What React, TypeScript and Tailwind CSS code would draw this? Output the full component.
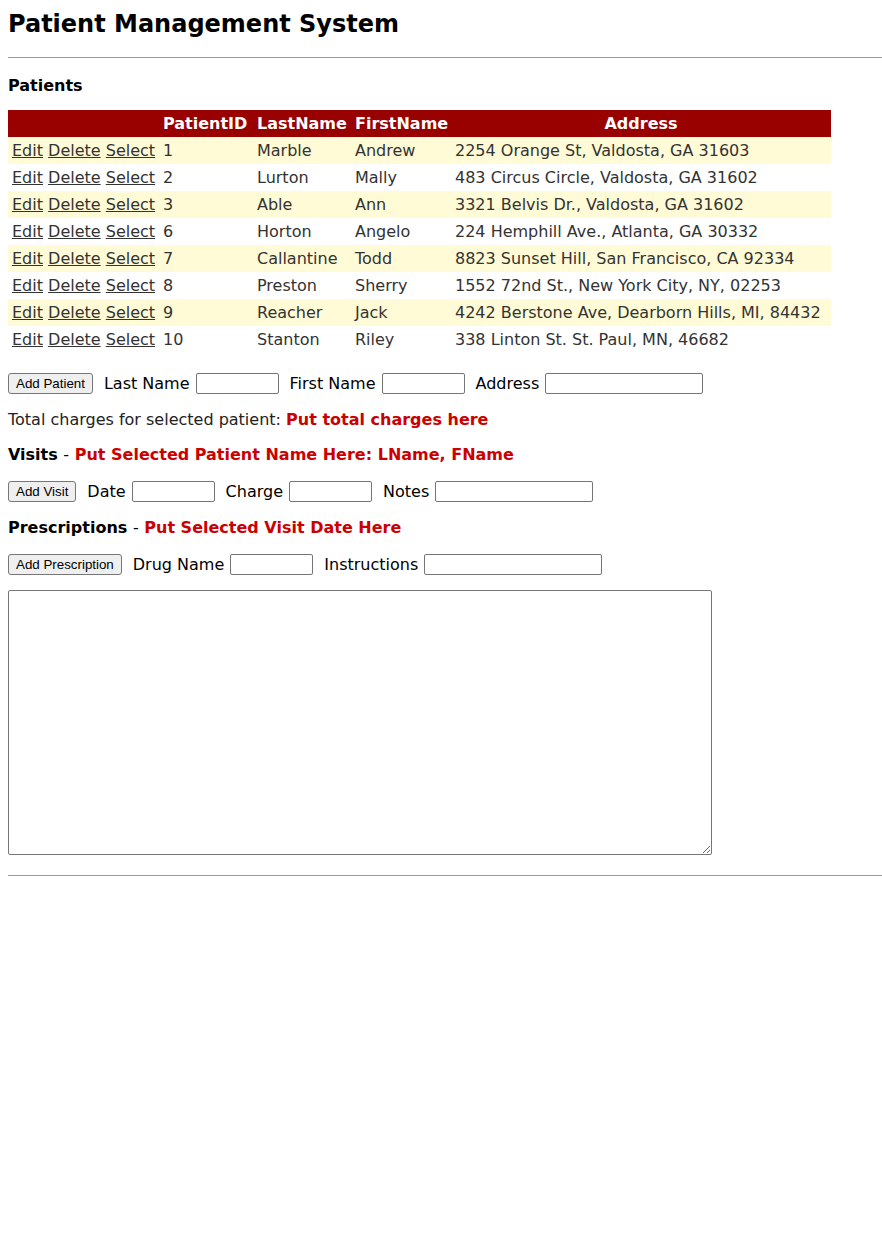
import React from "react";

type Patient = {
  id: number;
  last: string;
  first: string;
  address: string;
};

const patients: Patient[] = [
  { id: 1, last: "Marble", first: "Andrew", address: "2254 Orange St, Valdosta, GA 31603" },
  { id: 2, last: "Lurton", first: "Mally", address: "483 Circus Circle, Valdosta, GA 31602" },
  { id: 3, last: "Able", first: "Ann", address: "3321 Belvis Dr., Valdosta, GA 31602" },
  { id: 6, last: "Horton", first: "Angelo", address: "224 Hemphill Ave., Atlanta, GA 30332" },
  { id: 7, last: "Callantine", first: "Todd", address: "8823 Sunset Hill, San Francisco, CA 92334" },
  { id: 8, last: "Preston", first: "Sherry", address: "1552 72nd St., New York City, NY, 02253" },
  { id: 9, last: "Reacher", first: "Jack", address: "4242 Berstone Ave, Dearborn Hills, MI, 84432" },
  { id: 10, last: "Stanton", first: "Riley", address: "338 Linton St. St. Paul, MN, 46682" },
];

function FormButton({ children }: { children: React.ReactNode }) {
  return (
    <button className="h-[21px] px-[7px] border border-[#767676] bg-[#efefef] rounded-[3px] text-[13.33px] leading-[15px] text-black font-['Liberation_Sans',Arial,sans-serif]">
      {children}
    </button>
  );
}

function Field({ label, width }: { label: string; width: string }) {
  return (
    <>
      <label className="ml-[11px] mr-[6px]">{label}</label>
      <input
        type="text"
        className={`${width} h-[21px] border border-[#767676] rounded-[2px] bg-white`}
      />
    </>
  );
}

export default function App() {
  return (
    <div className="min-h-screen bg-white pl-2 text-[16px] text-black font-['DejaVu_Sans',Verdana,sans-serif]">
      <h1 className="pt-[10px] text-[24px] leading-[28px] font-bold">
        Patient Management System
      </h1>

      <hr className="mt-[19px] border-t border-[#999]" />

      <h3 className="mt-[18px] font-bold leading-[20px]">Patients</h3>

      {/* Patients table */}
      <table className="mt-[14px] table-fixed w-[823px] border-collapse text-[#333]">
        <colgroup>
          <col className="w-[151px]" />
          <col className="w-[94px]" />
          <col className="w-[98px]" />
          <col className="w-[100px]" />
          <col className="w-[380px]" />
        </colgroup>
        <thead>
          <tr className="bg-[#990000] text-white h-[27px]">
            <th className="px-1"></th>
            <th className="px-1 text-left font-bold">PatientID</th>
            <th className="px-1 text-left font-bold">LastName</th>
            <th className="px-1 text-left font-bold">FirstName</th>
            <th className="px-1 text-center font-bold">Address</th>
          </tr>
        </thead>
        <tbody>
          {patients.map((p, i) => (
            <tr
              key={p.id}
              className={`h-[27px] ${i % 2 === 0 ? "bg-[#fffbd6]" : "bg-white"}`}
            >
              <td className="px-1 whitespace-nowrap">
                <a href="#" className="underline text-[#333]">Edit</a>{" "}
                <a href="#" className="underline text-[#333]">Delete</a>{" "}
                <a href="#" className="underline text-[#333]">Select</a>
              </td>
              <td className="px-1">{p.id}</td>
              <td className="px-1 whitespace-nowrap">{p.last}</td>
              <td className="px-1 whitespace-nowrap">{p.first}</td>
              <td className="px-1 whitespace-nowrap">{p.address}</td>
            </tr>
          ))}
        </tbody>
      </table>

      {/* Add patient */}
      <div className="mt-[20px] flex items-center h-[21px]">
        <FormButton>Add Patient</FormButton>
        <Field label="Last Name" width="w-[83px]" />
        <Field label="First Name" width="w-[83px]" />
        <Field label="Address" width="w-[158px]" />
      </div>

      <p className="mt-[16px] leading-[20px] text-[#222]">
        Total charges for selected patient:{" "}
        <span className="font-bold text-[#cc0000]">Put total charges here</span>
      </p>

      <h3 className="mt-[15px] leading-[20px] font-bold">
        Visits <span className="font-normal">-</span>{" "}
        <span className="text-[#cc0000]">Put Selected Patient Name Here: LName, FName</span>
      </h3>

      <div className="mt-[16px] flex items-center h-[21px]">
        <FormButton>Add Visit</FormButton>
        <Field label="Date" width="w-[83px]" />
        <Field label="Charge" width="w-[83px]" />
        <Field label="Notes" width="w-[158px]" />
      </div>

      <h3 className="mt-[16px] leading-[20px] font-bold">
        Prescriptions <span className="font-normal">-</span>{" "}
        <span className="text-[#cc0000]">Put Selected Visit Date Here</span>
      </h3>

      <div className="mt-[16px] flex items-center h-[21px]">
        <FormButton>Add Prescription</FormButton>
        <Field label="Drug Name" width="w-[83px]" />
        <Field label="Instructions" width="w-[178px]" />
      </div>

      <textarea className="mt-[15px] block w-[704px] h-[265px] border border-[#767676] rounded-[2px] resize" />

      <hr className="mt-[20px] border-t border-[#999]" />
    </div>
  );
}
